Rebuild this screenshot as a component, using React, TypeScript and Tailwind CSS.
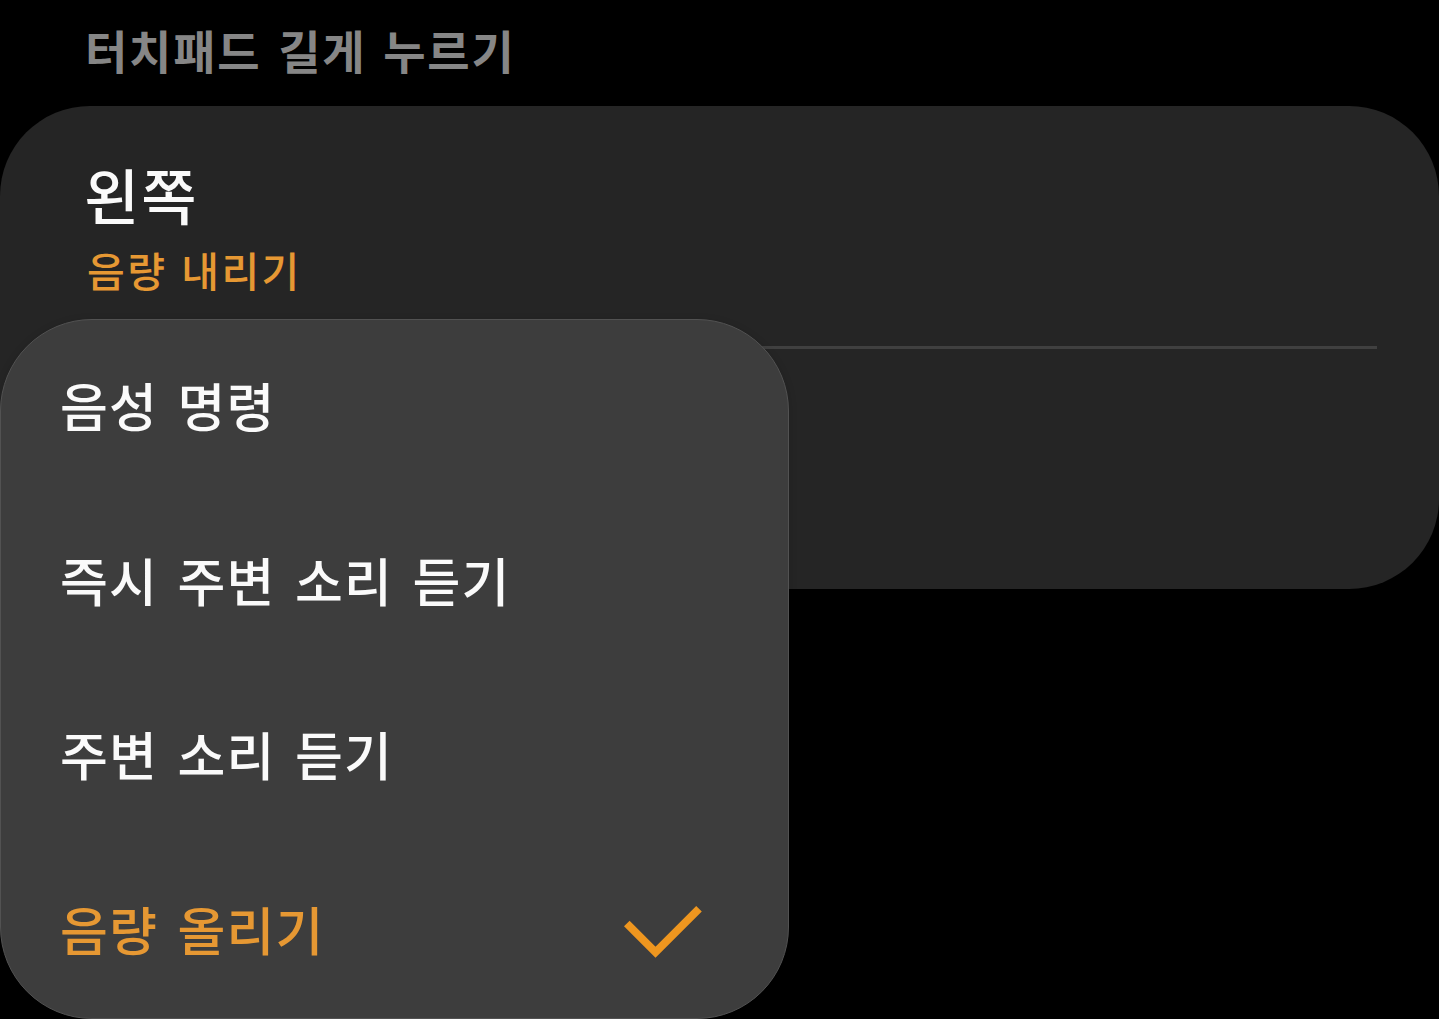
const MENU_ITEMS = [
  { label: "음성 명령", selected: false },
  { label: "즉시 주변 소리 듣기", selected: false },
  { label: "주변 소리 듣기", selected: false },
  { label: "음량 올리기", selected: true },
];

function CheckIcon() {
  return (
    <svg width="80" height="54" viewBox="0 0 80 54" fill="none" className="shrink-0">
      <path d="M3.8 19.5 L32.5 48.2 L76 4.7" stroke="#ee961f" strokeWidth="7.9" />
    </svg>
  );
}

function OptionMenu() {
  return (
    <ul
      role="listbox"
      className="absolute left-0 top-[319px] flex h-[700px] w-[789px] flex-col rounded-[92px] border border-[#525252] bg-[#3d3d3d] shadow-[0_2px_8px_rgba(0,0,0,0.15)]"
    >
      {MENU_ITEMS.map((item) => (
        <li
          key={item.label}
          role="option"
          aria-selected={item.selected}
          className={`flex flex-1 items-center justify-between pl-[59px] pr-[85px] text-[52px] leading-none tracking-[1.2px] [word-spacing:6.5px] ${
            item.selected ? "text-[#e69833]" : "text-[#fafafa]"
          }`}
        >
          <span className="-mt-1">{item.label}</span>
          {item.selected && <CheckIcon />}
        </li>
      ))}
    </ul>
  );
}

export default function App() {
  return (
    <div className="relative h-[1019px] w-[1439px] overflow-hidden bg-black font-['Noto_Sans_CJK_KR',sans-serif] font-medium whitespace-nowrap">
      <h2 className="flex h-[106px] items-center pb-2 pl-[85px] text-[46px] leading-none font-bold tracking-[1.8px] text-[#868686] [word-spacing:4.5px]">
        터치패드 길게 누르기
      </h2>

      <section className="h-[483px] rounded-[90px] bg-[#252525]">
        <div className="mx-[62px] flex h-[243px] flex-col border-b-[3px] border-[#404040] pt-[57px] pl-[22px]">
          <div className="text-[60px] leading-[62px] tracking-[2px] text-[#fafafa]">왼쪽</div>
          <div className="mt-[22px] pl-[3px] text-[41px] leading-[44px] tracking-[2.5px] text-[#e69833] [word-spacing:2px]">
            음량 내리기
          </div>
        </div>
      </section>

      <OptionMenu />
    </div>
  );
}
